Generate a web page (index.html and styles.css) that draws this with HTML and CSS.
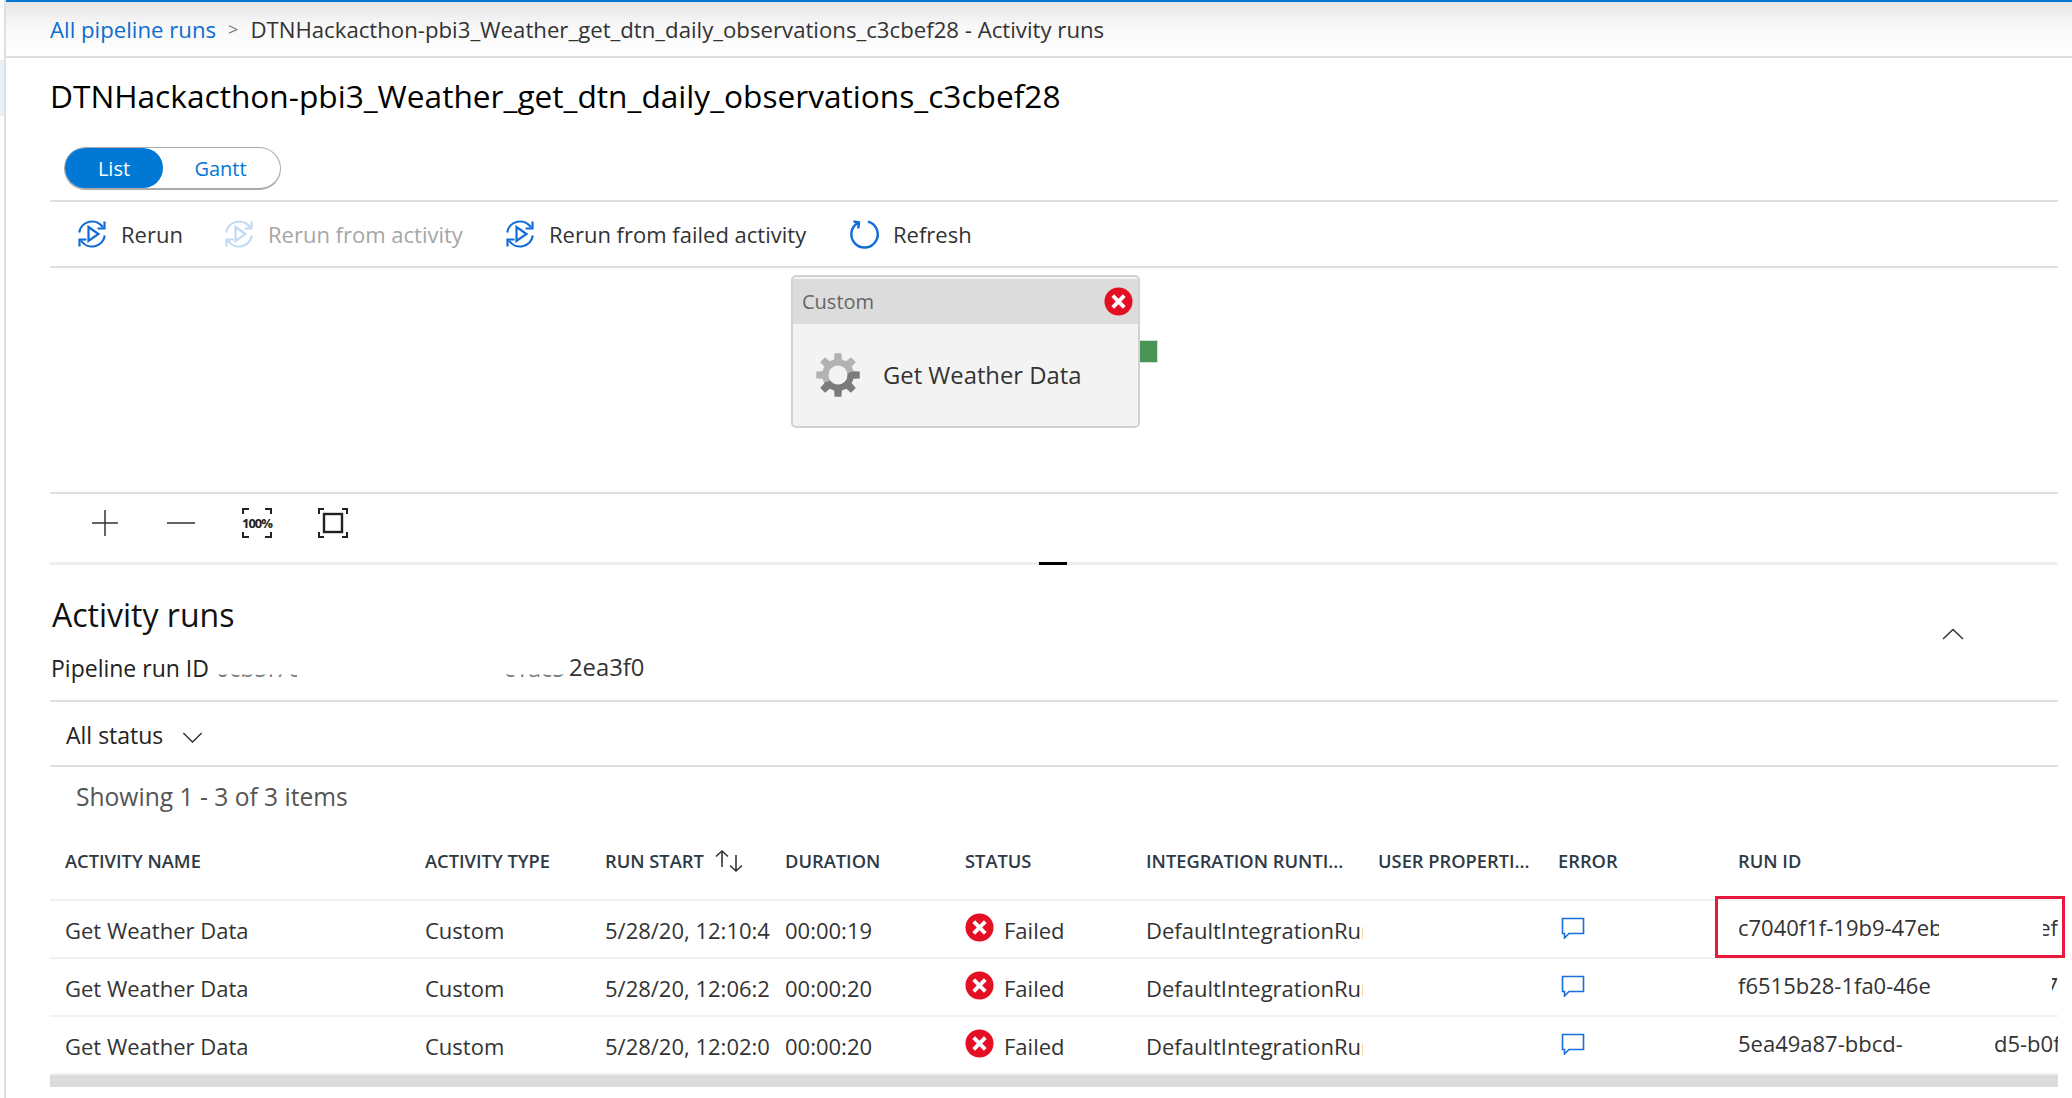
FILE: index.html
```html
<!DOCTYPE html>
<html lang="en">
<head>
<meta charset="utf-8">
<title>Activity runs</title>
<link rel="stylesheet" href="styles.css">
</head>
<body>
<div class="app">
  <aside class="rail"><div class="rail-mark"></div></aside>
  <div class="content">
    <nav class="crumbs">
      <a class="crumb-link">All pipeline runs</a>
      <span class="crumb-sep">&gt;</span>
      <span>DTNHackacthon-pbi3_Weather_get_dtn_daily_observations_c3cbef28 - Activity runs</span>
    </nav>
    <main class="main">
      <h1 class="title">DTNHackacthon-pbi3_Weather_get_dtn_daily_observations_c3cbef28</h1>
      <div class="toggle"><span class="toggle-on">List</span><span class="toggle-off">Gantt</span></div>

      <div class="toolbar">
        <div class="tool tool-a">
          <svg class="ico" viewBox="0 0 30 30"><use href="#rerun"/></svg><span>Rerun</span>
        </div>
        <div class="tool tool-b disabled">
          <svg class="ico" viewBox="0 0 30 30"><use href="#rerun"/></svg><span>Rerun from activity</span>
        </div>
        <div class="tool tool-c">
          <svg class="ico" viewBox="0 0 30 30"><use href="#rerun"/></svg><span>Rerun from failed activity</span>
        </div>
        <div class="tool">
          <svg class="ico" viewBox="0 0 30 30"><path class="s-blue" d="M9.5 3.6A13.2 13.2 0 1 0 19 2.6"/><path class="s-blue" d="M4.5 2.5L10 3.5L9.2 9.5"/></svg><span>Refresh</span>
        </div>
      </div>

      <div class="diagram">
        <div class="node">
          <div class="node-head"><span>Custom</span>
            <svg class="err" viewBox="0 0 30 30"><use href="#err"/></svg>
          </div>
          <div class="node-body">
            <svg class="gear" viewBox="-23 -23 46 46">
              <defs><linearGradient id="gearfill" gradientUnits="userSpaceOnUse" x1="-8" y1="-20" x2="8" y2="20"><stop offset=".55" stop-color="#b1b2b1"/><stop offset=".55" stop-color="#7b7b7b"/></linearGradient></defs>
              <path fill="url(#gearfill)" d="M-3.87 -15.52L-3.44 -21.73L3.44 -21.73L3.87 -15.52L8.24 -13.71L12.93 -17.8L17.8 -12.93L13.71 -8.24L15.52 -3.87L21.73 -3.44L21.73 3.44L15.52 3.87L13.71 8.24L17.8 12.93L12.93 17.8L8.24 13.71L3.87 15.52L3.44 21.73L-3.44 21.73L-3.87 15.52L-8.24 13.71L-12.93 17.8L-17.8 12.93L-13.71 8.24L-15.52 3.87L-21.73 3.44L-21.73 -3.44L-15.52 -3.87L-13.71 -8.24L-17.8 -12.93L-12.93 -17.8L-8.24 -13.71Z"/>
              <circle r="9.5" fill="#f3f3f3"/>
            </svg>
            <span>Get Weather Data</span>
          </div>
          <div class="port"></div>
        </div>
      </div>

      <div class="zoombar">
        <svg class="zi" viewBox="0 0 34 34"><path class="s-dark" d="M17 4V30M4 17H30"/></svg>
        <svg class="zi" viewBox="0 0 34 34"><path class="s-dark" d="M3 17H31"/></svg>
        <div class="zi zi-100"><svg class="zi-frame" viewBox="0 0 34 34"><path class="s-frame" d="M3 8V3H9M25 3H31V8M3 26V31H9M25 31H31V26"/></svg><span class="pct">100%</span></div>
        <svg class="zi" viewBox="0 0 34 34"><path class="s-frame" d="M3 8V3H8M26 3H31V8M3 26V31H8M26 31H31V26"/><rect class="s-box" x="8" y="8" width="18" height="18"/></svg>
      </div>
      <div class="splitter"><span class="grip"></span></div>

      <section class="runs">
        <div class="runs-head">
          <h2 class="runs-title">Activity runs</h2>
          <svg class="collapse" viewBox="0 0 22 12"><path class="s-dark" d="M1 11L11 1.5L21 11"/></svg>
        </div>
        <div class="pipe-id">
          <span class="pipe-label">Pipeline run ID</span>
          <span class="pipe-mask pipe-mask-a">0cb5f7c</span>
          <span class="pipe-mask pipe-mask-b">c1ac5</span>
          <span class="pipe-tail">2ea3f0</span>
        </div>
        <div class="filter"><span>All status</span>
          <svg class="chev" viewBox="0 0 22 12"><path class="s-dark" d="M1 1L11 11L21 1"/></svg>
        </div>
        <div class="showing">Showing 1 - 3 of 3 items</div>

        <div class="table">
          <div class="row head">
            <div class="cell">ACTIVITY NAME</div>
            <div class="cell">ACTIVITY TYPE</div>
            <div class="cell sort">RUN START
              <svg class="sort-ico" viewBox="0 0 28 24"><path class="s-sort" d="M8 18V2M2 7.5L8 2L14 7.5M22 6V22M16 16.5L22 22L28 16.5"/></svg>
            </div>
            <div class="cell">DURATION</div>
            <div class="cell">STATUS</div>
            <div class="cell">INTEGRATION RUNTI...</div>
            <div class="cell">USER PROPERTI...</div>
            <div class="cell">ERROR</div>
            <div class="cell">RUN ID</div>
          </div>

          <div class="row">
            <div class="cell">Get Weather Data</div>
            <div class="cell">Custom</div>
            <div class="cell">5/28/20, 12:10:47 PM</div>
            <div class="cell">00:00:19</div>
            <div class="cell status"><svg class="err-s" viewBox="0 0 30 30"><use href="#err"/></svg><span>Failed</span></div>
            <div class="cell">DefaultIntegrationRuntime</div>
            <div class="cell"></div>
            <div class="cell"><svg class="chat" viewBox="0 0 24 22"><use href="#chat"/></svg></div>
            <div class="cell runid">
              <span class="id-left id-w1">c7040f1f-19b9-47eb</span><span class="id-right id-end id-r1">ef</span>
              <div class="callout"></div>
            </div>
          </div>

          <div class="row">
            <div class="cell">Get Weather Data</div>
            <div class="cell">Custom</div>
            <div class="cell">5/28/20, 12:06:25 PM</div>
            <div class="cell">00:00:20</div>
            <div class="cell status"><svg class="err-s" viewBox="0 0 30 30"><use href="#err"/></svg><span>Failed</span></div>
            <div class="cell">DefaultIntegrationRuntime</div>
            <div class="cell"></div>
            <div class="cell"><svg class="chat" viewBox="0 0 24 22"><use href="#chat"/></svg></div>
            <div class="cell runid">
              <span class="id-left id-w2">f6515b28-1fa0-46e</span><span class="id-right id-end id-r2">7</span>
            </div>
          </div>

          <div class="row">
            <div class="cell">Get Weather Data</div>
            <div class="cell">Custom</div>
            <div class="cell">5/28/20, 12:02:07 PM</div>
            <div class="cell">00:00:20</div>
            <div class="cell status"><svg class="err-s" viewBox="0 0 30 30"><use href="#err"/></svg><span>Failed</span></div>
            <div class="cell">DefaultIntegrationRuntime</div>
            <div class="cell"></div>
            <div class="cell"><svg class="chat" viewBox="0 0 24 22"><use href="#chat"/></svg></div>
            <div class="cell runid">
              <span class="id-left id-w3">5ea49a87-bbcd-</span><span class="id-right id-r3">d5-b0f</span>
            </div>
          </div>
          <div class="scrollbar"></div>
        </div>
      </section>
    </main>
  </div>
</div>

<svg class="defs" width="0" height="0">
  <defs>
    <g id="rerun">
      <path class="s-rerun" d="M2.2 13.5A13 13 0 0 1 26 8.5"/>
      <path class="s-rerun" d="M27.8 16.5A13 13 0 0 1 4 21.5"/>
      <path class="s-rerun" d="M27.5 2.5V9.5H20.5"/>
      <path class="s-rerun" d="M2.5 27.5V20.5H9.5"/>
      <path class="s-rerun" d="M11.5 8L21.5 15L11.5 22Z"/>
    </g>
    <g id="err">
      <circle cx="15" cy="15" r="14.5" fill="#e50f23"/>
      <path d="M9 9L21 21M21 9L9 21" stroke="#fff" stroke-width="4" fill="none"/>
    </g>
    <g id="chat">
      <path d="M1.5 1.5H22.5V16.5H8L3.5 21V16.5H1.5Z" fill="none" stroke="#1a6fd8" stroke-width="1.6"/>
    </g>
  </defs>
</svg>
</body>
</html>
```
FILE: styles.css
```css
* { box-sizing: border-box; }
html, body { margin: 0; padding: 0; background: #fff; }
body { font-family: "Open Sans", "Noto Sans", sans-serif; color: #333; width: 2072px; height: 1098px; overflow: hidden; }
.app { display: flex; height: 1098px; }
.rail { width: 6px; flex: none; border-right: 2px solid #dfdfdf; padding-top: 60px; }
.rail-mark { height: 56px; width: 4px; background: #e6f1fa; }
.content { flex: 1; min-width: 0; }

.crumbs { height: 58px; border-top: 2px solid #0078d4; border-bottom: 2px solid #dfdfdf; background: linear-gradient(#e6e6e6, #f8f8f8 45%, #fff); padding-left: 44px; display: flex; align-items: center; gap: 12px; font-size: 22.2px; color: #333; white-space: nowrap; }
.crumb-link { color: #0f6cd0; }
.crumb-sep { color: #777; font-size: 18px; }

.main { padding: 0 14px 0 44px; }
.title { margin: 18px 0 31px; font-size: 31.65px; line-height: 40px; font-weight: 400; color: #000; white-space: nowrap; }

.toggle { width: 217px; height: 43px; margin-left: 14px; border: 1px solid #aaa; border-bottom-width: 2px; border-radius: 22px; display: flex; font-size: 20px; }
.toggle-on { width: 98px; background: #0078d4; color: #fff; border-radius: 21px; display: flex; align-items: center; justify-content: center; }
.toggle-off { flex: 1; color: #0078d4; display: flex; align-items: center; justify-content: center; padding-right: 2px; }

.toolbar { margin-top: 10px; height: 68px; border-top: 2px solid #dfdfdf; border-bottom: 2px solid #dfdfdf; padding-left: 27px; display: flex; align-items: center; font-size: 22px; color: #333; }
.tool { display: flex; align-items: center; gap: 14px; }
.tool-a { width: 147px; }
.tool-b { width: 281px; }
.tool-c { width: 344px; }
.ico { width: 30px; height: 30px; overflow: visible; }
.disabled { color: #a6a6a6; }
.disabled .ico { opacity: .25; }
.s-rerun { fill: none; stroke: #0f6cd8; stroke-width: 2.2; }
.s-blue { fill: none; stroke: #0f6cd8; stroke-width: 2.4; }

.diagram { position: relative; height: 226px; border-bottom: 2px solid #dfdfdf; }
.node { position: absolute; left: 741px; top: 7px; width: 349px; height: 153px; border: 2px solid #d2d2d2; border-radius: 5px; background: #f3f3f3; padding-top: 2px; }
.node-head { height: 45px; background: #dcdcdc; display: flex; align-items: center; justify-content: space-between; padding: 0 5px 0 9px; font-size: 20px; color: #666; }
.err { width: 29px; height: 29px; }
.node-body { height: 102px; display: flex; align-items: center; gap: 22px; padding-left: 22px; font-size: 23.8px; color: #333; }
.gear { width: 46px; height: 46px; }
.port { position: absolute; left: 347px; top: 63px; width: 18px; height: 23px; background: #4a9457; border: 1px solid #cfe3d3; border-left: 0; }

.zoombar { height: 68px; padding: 0 0 11px 38px; display: flex; align-items: center; gap: 42px; }
.zi { width: 34px; height: 34px; position: relative; flex: none; }
.zi-frame { width: 34px; height: 34px; display: block; }
.s-dark { fill: none; stroke: #333; stroke-width: 1.5; }
.s-frame { fill: none; stroke: #222; stroke-width: 2; }
.s-box { fill: none; stroke: #222; stroke-width: 2.4; }
.pct { position: absolute; left: 0; right: 0; top: 9px; text-align: center; font-size: 13px; line-height: 16px; font-weight: 700; color: #222; letter-spacing: -1px; }

.splitter { height: 3px; background: #eee; position: relative; }
.grip { position: absolute; left: 989px; top: 0; width: 28px; height: 3px; background: #000; }

.runs-head { height: 72px; padding: 28px 0 0 2px; display: flex; justify-content: space-between; }
.runs-title { margin: 0; font-size: 32px; line-height: 44px; font-weight: 400; color: #111; }
.collapse { width: 22px; height: 12px; margin: 35px 94px 0 0; }
.pipe-id { height: 65px; border-bottom: 2px solid #dfdfdf; padding: 0 0 2px 1px; display: flex; align-items: center; font-size: 23px; color: #222; white-space: nowrap; }
.pipe-label { width: 165px; }
.pipe-mask { overflow: hidden; clip-path: inset(72% 0 0 0); color: #777; }
.pipe-mask-a { width: 81px; }
.pipe-mask-b { width: 65px; margin-left: 207px; }
.pipe-tail { color: #333; font-size: 23.8px; margin-top: -2px; }
.filter { height: 65px; border-bottom: 2px solid #dfdfdf; padding: 3px 0 0 16px; display: flex; align-items: center; gap: 19px; font-size: 23px; color: #222; }
.chev { width: 21px; height: 11px; margin-top: 4px; }
.showing { height: 59px; padding: 8px 0 0 26px; font-size: 24.6px; line-height: 44px; color: #555; }

.row { display: grid; grid-template-columns: 360px 180px 180px 180px 181px 232px 180px 180px 1fr; height: 58px; padding-top: 1px; border-bottom: 2px solid #f1f1f1; font-size: 22px; color: #333; align-items: center; }
.row.head { height: 75px; padding: 0 0 4px; font-size: 18.3px; font-weight: 600; color: #2e3a45; }
.cell { padding-left: 15px; white-space: nowrap; overflow: hidden; }
.sort { display: flex; align-items: center; gap: 10px; overflow: visible; }
.sort-ico { width: 28px; height: 24px; overflow: visible; }
.s-sort { fill: none; stroke: #333; stroke-width: 1.6; }
.status { display: flex; align-items: center; gap: 10px; }
.err-s { width: 29px; height: 29px; margin-bottom: 4px; flex: none; }
.chat { width: 24px; height: 22px; display: block; margin: 0 0 4px 3px; }
.runid { position: relative; display: flex; align-self: stretch; align-items: center; overflow: visible; padding-bottom: 6px; }
.id-left, .id-right { display: flex; overflow: hidden; white-space: nowrap; }
.id-w1 { width: 201px; }
.id-w2 { width: 196px; }
.id-w3 { width: 175px; }
.id-right { margin-left: auto; }
.id-end { justify-content: flex-end; }
.id-r1 { width: 15px; }
.id-r2 { width: 6px; }
.id-r3 { width: 64px; }
.callout { position: absolute; left: -8px; right: -7px; top: -6px; height: 62px; border: 3px solid #e8193c; }
.scrollbar { height: 12px; background: #dcdcdc; }
.defs { position: absolute; }
```
